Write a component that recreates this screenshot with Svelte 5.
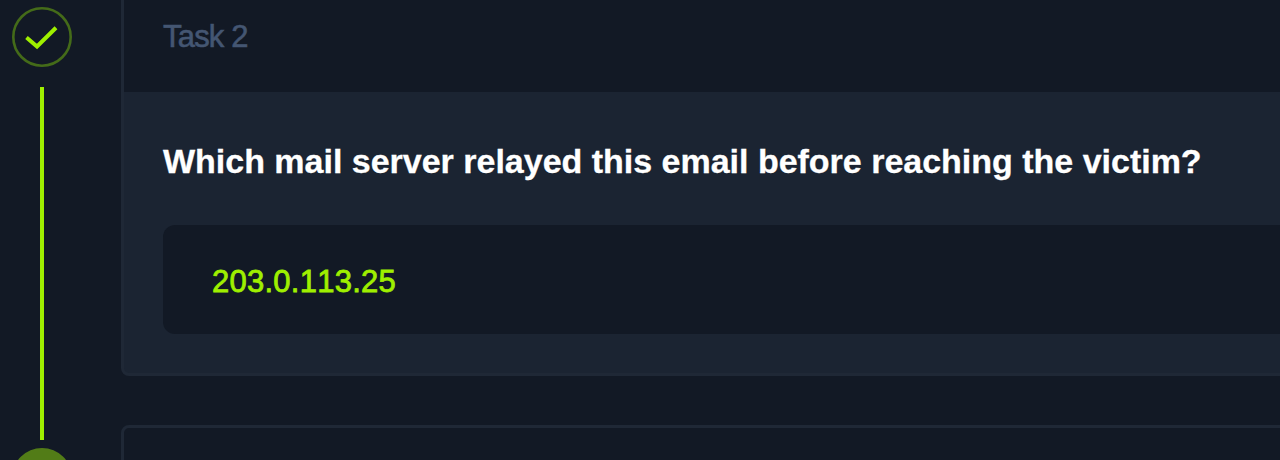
<script>
  const task = {
    label: 'Task 2',
    question: 'Which mail server relayed this email before reaching the victim?',
    answer: '203.0.113.25'
  };
</script>

<main class="page">
  <aside class="rail">
    <svg class="badge" width="60" height="60" viewBox="0 0 60 60" fill="none">
      <circle cx="30" cy="30" r="28.7" stroke="#446b19" stroke-width="2.6" />
      <path d="M14.5 30.5 L25 39.5 L44 20.8" stroke="#9fef00" stroke-width="4" />
    </svg>
    <div class="line"></div>
    <div class="dot"></div>
  </aside>
  <div class="cards">
    <section class="card">
      <header class="head"><span class="label">{task.label}</span></header>
      <div class="body">
        <h2 class="question">{task.question}</h2>
        <div class="field"><span class="answer">{task.answer}</span></div>
      </div>
    </section>
    <section class="card next"></section>
  </div>
</main>

<style>
  :global(body) {
    margin: 0;
    background: #121925;
  }
  .page {
    display: flex;
    width: 1280px;
    height: 460px;
    overflow: hidden;
    background: #121925;
    font-family: "Liberation Sans", Arial, sans-serif;
    white-space: nowrap;
  }
  .rail {
    flex: none;
    width: 84px;
    margin-right: 37px;
    padding-top: 7px;
    box-sizing: border-box;
    display: flex;
    flex-direction: column;
    align-items: center;
  }
  .badge {
    flex: none;
    display: block;
  }
  .line {
    flex: none;
    width: 4px;
    height: 353px;
    margin-top: 20px;
    background: #9fef00;
  }
  .dot {
    flex: none;
    width: 60px;
    height: 60px;
    margin-top: 8px;
    border-radius: 50%;
    background: #527c17;
  }
  .cards {
    flex: none;
    width: 1200px;
  }
  .card {
    box-sizing: border-box;
    height: 376px;
    border: 3px solid #1f2836;
    border-top: 0;
    border-radius: 0 0 8px 8px;
    background: #1b2432;
    overflow: hidden;
  }
  .head {
    height: 92px;
    box-sizing: border-box;
    padding: 17px 0 0 39px;
    background: #121925;
  }
  .label {
    display: block;
    font-size: 31px;
    line-height: 40px;
    letter-spacing: -0.8px;
    color: #445672;
    -webkit-text-stroke: 0.6px #445672;
  }
  .body {
    padding: 49px 0 0 39px;
  }
  .question {
    margin: 0;
    font-size: 34px;
    line-height: 40px;
    font-weight: 700;
    letter-spacing: -0.01px;
    color: #fff;
    -webkit-text-stroke: 0.3px #fff;
  }
  .field {
    height: 109px;
    margin-top: 44px;
    padding: 37px 0 0 49px;
    box-sizing: border-box;
    border-radius: 12px;
    background: #121925;
  }
  .answer {
    display: block;
    font-size: 31px;
    line-height: 40px;
    font-kerning: none;
    letter-spacing: 0.25px;
    color: #9fef00;
    -webkit-text-stroke: 0.8px #9fef00;
  }
  .next {
    height: 120px;
    margin-top: 49px;
    border-top: 3px solid #1f2836;
    border-radius: 8px;
    background: #121925;
  }
</style>
